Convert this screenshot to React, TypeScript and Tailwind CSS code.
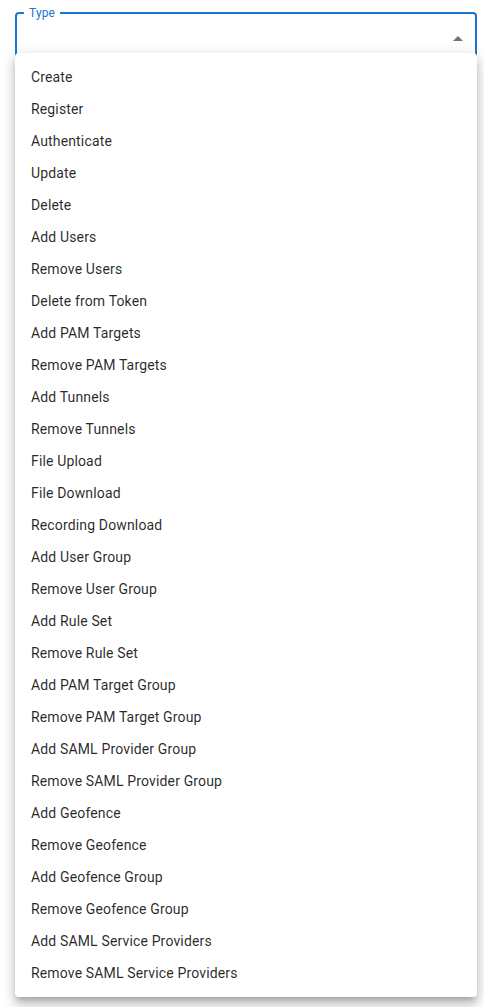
import React from 'react'

const options = [
  'Create',
  'Register',
  'Authenticate',
  'Update',
  'Delete',
  'Add Users',
  'Remove Users',
  'Delete from Token',
  'Add PAM Targets',
  'Remove PAM Targets',
  'Add Tunnels',
  'Remove Tunnels',
  'File Upload',
  'File Download',
  'Recording Download',
  'Add User Group',
  'Remove User Group',
  'Add Rule Set',
  'Remove Rule Set',
  'Add PAM Target Group',
  'Remove PAM Target Group',
  'Add SAML Provider Group',
  'Remove SAML Provider Group',
  'Add Geofence',
  'Remove Geofence',
  'Add Geofence Group',
  'Remove Geofence Group',
  'Add SAML Service Providers',
  'Remove SAML Service Providers',
]

export default function App() {
  return (
    <div className="relative min-h-[1007px] bg-white font-['Roboto',sans-serif]">
      {/* Outlined select, focused */}
      <div className="pl-[15px] pr-[7px] pt-[12px]">
        <div className="relative h-[56px] rounded-[4px] border-2 border-[#1976d2]">
          <span className="absolute -top-[9px] left-[7px] bg-white px-[5px] text-[12px] leading-[16px] tracking-[0.15px] text-[#1976d2]">
            Type
          </span>
          <svg
            className="absolute right-[5px] top-[13px] h-6 w-6 rotate-180 fill-black/55"
            viewBox="0 0 24 24"
          >
            <path d="M7 10l5 5 5-5z" />
          </svg>
        </div>
      </div>

      {/* Open menu */}
      <ul className="absolute left-[15px] top-[53px] w-[462px] rounded-[4px] bg-white py-2 shadow-[0px_5px_5px_-3px_rgba(0,0,0,0.2),0px_8px_10px_1px_rgba(0,0,0,0.14),0px_3px_14px_2px_rgba(0,0,0,0.12)]">
        {options.map((o) => (
          <li
            key={o}
            className="flex h-8 items-center px-4 text-[14px] tracking-[0.15px] text-black/85"
          >
            {o}
          </li>
        ))}
      </ul>
    </div>
  )
}
